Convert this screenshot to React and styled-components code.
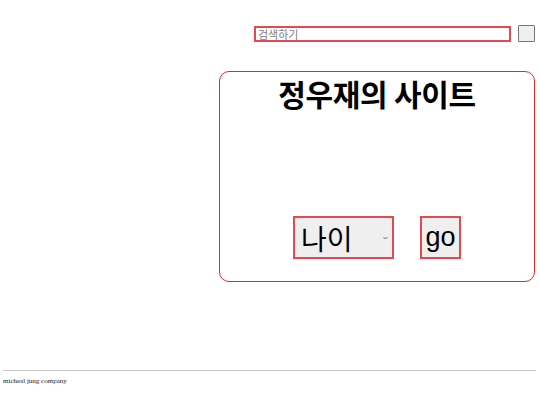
import React from 'react';
import styled, {createGlobalStyle} from 'styled-components';

const GlobalStyle = createGlobalStyle`
  body {
    margin: 0;
    font-family: "Liberation Serif", "Noto Sans CJK KR", serif;
    background: #fff;
  }
`;

const Page = styled.div`
  width: 540px;
`;

const Header = styled.header`
  display: flex;
  justify-content: flex-end;
  align-items: center;
  gap: 7px;
  padding: 25px 5px 0 0;
`;

const SearchInput = styled.input`
  box-sizing: border-box;
  width: 257px;
  height: 16px;
  margin: 1px 0 0;
  padding: 0 2px;
  border: 2px solid #e04a50;
  font-family: "Noto Sans CJK KR", sans-serif;
  font-size: 11px;
  outline: none;
  &::placeholder {
    color: #808080;
  }
`;

const SearchButton = styled.button`
  box-sizing: border-box;
  width: 17px;
  height: 17px;
  padding: 0;
  background: #efefef;
  border: 1px solid #767676;
  border-radius: 1px;
`;

const Main = styled.main`
  display: flex;
  justify-content: flex-end;
  padding: 29px 5px 0 0;
`;

const Card = styled.section`
  box-sizing: border-box;
  width: 316px;
  height: 211px;
  border: 1.5px solid #dc2a30;
  border-radius: 10px;
  display: flex;
  flex-direction: column;
  align-items: center;
  justify-content: space-between;
  padding: 3px 0 22px;
`;

const Title = styled.h1`
  margin: 0;
  font-family: "Noto Sans CJK KR", sans-serif;
  font-size: 30px;
  font-weight: 700;
  line-height: 1.2;
  letter-spacing: -0.3px;
  color: #000;
`;

const Controls = styled.div`
  display: flex;
  gap: 26px;
`;

const SelectWrap = styled.div`
  position: relative;
`;

const AgeSelect = styled.select`
  box-sizing: border-box;
  width: 101px;
  height: 43px;
  appearance: none;
  background: #efefef;
  border: 2px solid #e04a50;
  border-radius: 0;
  font-family: "Noto Sans CJK KR", sans-serif;
  font-size: 28px;
  color: #000;
  padding: 0 6px;
`;

const Caret = styled.svg`
  position: absolute;
  right: 6px;
  top: 20px;
  pointer-events: none;
`;

const GoButton = styled.button`
  box-sizing: border-box;
  width: 41px;
  height: 43px;
  padding: 0;
  background: #efefef;
  border: 2px solid #e04a50;
  font-family: "Liberation Sans", Arial, sans-serif;
  font-size: 27px;
  color: #000;
`;

const Footer = styled.footer`
  margin-top: 88px;
`;

const Rule = styled.hr`
  margin: 0 4px 0 3px;
  border: 0;
  border-top: 1px solid #c8c8c8;
`;

const Credit = styled.p`
  margin: 6px 3px;
  font-size: 7px;
  color: #222;
`;

export default function App() {
  return (
    <Page>
      <GlobalStyle />
      <Header>
        <SearchInput placeholder="검색하기" />
        <SearchButton />
      </Header>
      <Main>
        <Card>
          <Title>정우재의 사이트</Title>
          <Controls>
            <SelectWrap>
              <AgeSelect defaultValue="age">
                <option value="age">나이</option>
              </AgeSelect>
              <Caret width="5" height="4" viewBox="0 0 5 4">
                <path d="M0.5 1 L2.5 3 L4.5 1" fill="none" stroke="#555" strokeWidth="0.9" />
              </Caret>
            </SelectWrap>
            <GoButton>go</GoButton>
          </Controls>
        </Card>
      </Main>
      <Footer>
        <Rule />
        <Credit>micheal jung company</Credit>
      </Footer>
    </Page>
  );
}
